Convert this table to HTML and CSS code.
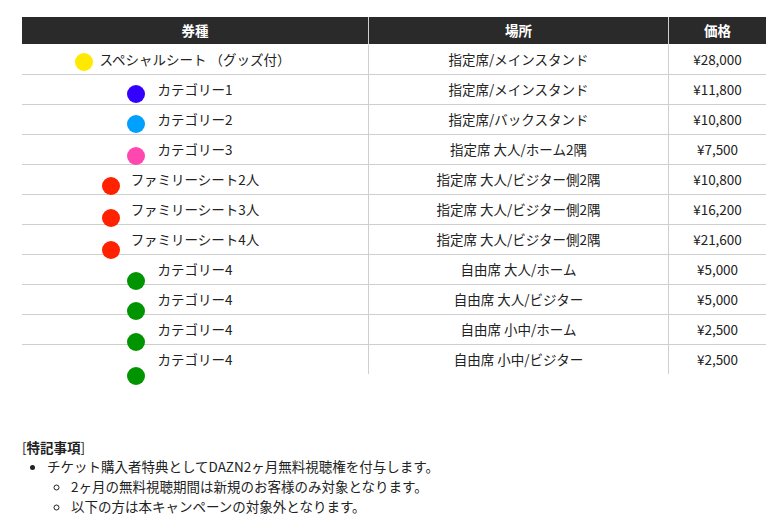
FILE: index.html
```html
<!DOCTYPE html>
<html lang="ja">
<head>
<meta charset="utf-8">
<title>券種</title>
<link rel="stylesheet" href="styles.css">
</head>
<body>
<main class="page">
  <table class="price-table">
    <thead>
      <tr>
        <th class="col-ticket">券種</th>
        <th class="col-place">場所</th>
        <th class="col-price">価格</th>
      </tr>
    </thead>
    <tbody>
      <tr>
        <td><div class="ticket"><span class="dot yellow gap-6 drop-2"></span><span class="name">スペシャルシート （グッズ付）</span></div></td>
        <td>指定席/メインスタンド</td>
        <td>¥28,000</td>
      </tr>
      <tr>
        <td><div class="ticket"><span class="dot blue gap-13 drop-4"></span><span class="name">カテゴリー1</span></div></td>
        <td>指定席/メインスタンド</td>
        <td>¥11,800</td>
      </tr>
      <tr>
        <td><div class="ticket"><span class="dot sky gap-13 drop-4"></span><span class="name">カテゴリー2</span></div></td>
        <td>指定席/バックスタンド</td>
        <td>¥10,800</td>
      </tr>
      <tr>
        <td><div class="ticket"><span class="dot pink gap-13 drop-6"></span><span class="name">カテゴリー3</span></div></td>
        <td>指定席 大人/ホーム2隅</td>
        <td>¥7,500</td>
      </tr>
      <tr>
        <td><div class="ticket"><span class="dot red gap-11 drop-6"></span><span class="name">ファミリーシート2人</span></div></td>
        <td>指定席 大人/ビジター側2隅</td>
        <td>¥10,800</td>
      </tr>
      <tr>
        <td><div class="ticket"><span class="dot red gap-11 drop-8"></span><span class="name">ファミリーシート3人</span></div></td>
        <td>指定席 大人/ビジター側2隅</td>
        <td>¥16,200</td>
      </tr>
      <tr>
        <td><div class="ticket"><span class="dot red gap-11 drop-10"></span><span class="name">ファミリーシート4人</span></div></td>
        <td>指定席 大人/ビジター側2隅</td>
        <td>¥21,600</td>
      </tr>
      <tr>
        <td><div class="ticket"><span class="dot green gap-13 drop-11"></span><span class="name">カテゴリー4</span></div></td>
        <td>自由席 大人/ホーム</td>
        <td>¥5,000</td>
      </tr>
      <tr>
        <td><div class="ticket"><span class="dot green gap-13 drop-11"></span><span class="name">カテゴリー4</span></div></td>
        <td>自由席 大人/ビジター</td>
        <td>¥5,000</td>
      </tr>
      <tr>
        <td><div class="ticket"><span class="dot green gap-13 drop-12"></span><span class="name">カテゴリー4</span></div></td>
        <td>自由席 小中/ホーム</td>
        <td>¥2,500</td>
      </tr>
      <tr>
        <td><div class="ticket"><span class="dot green gap-13 drop-16"></span><span class="name">カテゴリー4</span></div></td>
        <td>自由席 小中/ビジター</td>
        <td>¥2,500</td>
      </tr>
    </tbody>
  </table>

  <section class="notes">
    <p class="notes-title">[<strong>特記事項</strong>]</p>
    <ul class="notes-list">
      <li>チケット購入者特典としてDAZN2ヶ月無料視聴権を付与します。
        <ul class="notes-sub">
          <li>2ヶ月の無料視聴期間は新規のお客様のみ対象となります。</li>
          <li>以下の方は本キャンペーンの対象外となります。</li>
        </ul>
      </li>
    </ul>
  </section>
</main>
</body>
</html>
```

FILE: styles.css
```css
* {
  box-sizing: border-box;
}

html, body {
  margin: 0;
  padding: 0;
  background: #fff;
}

body {
  font-family: "Noto Sans CJK JP", "Noto Sans", sans-serif;
  font-size: 13.5px;
  color: #222;
}

.page {
  padding: 17px 17px 0 22px;
}

.price-table {
  width: 744px;
  border-collapse: separate;
  border-spacing: 0;
  table-layout: fixed;
}

.price-table th {
  height: 28px;
  padding: 0;
  background: #2a2a2a;
  color: #fff;
  font-weight: 700;
  font-size: 13.5px;
  line-height: 27px;
  text-align: center;
  border-bottom: 1px solid #fff;
}

.price-table th:not(:last-child),
.price-table td:not(:last-child) {
  border-right: 1px solid #cfcfcf;
}

.col-ticket { width: 347px; }
.col-place { width: 300px; }
.col-price { width: 97px; }

.price-table td {
  height: 30px;
  padding: 0;
  text-align: center;
  line-height: 29px;
  border-bottom: 1px solid #cfcfcf;
  vertical-align: middle;
}

.price-table tbody tr:last-child td {
  height: 29px;
  border-bottom: none;
}

.ticket {
  display: grid;
  grid-template-columns: 1fr auto 1fr;
  align-items: center;
  height: 29px;
}

.name {
  white-space: nowrap;
}

.dot {
  justify-self: end;
  width: 18px;
  height: 18px;
  border-radius: 50%;
}

.yellow { background: #ffe900; }
.blue { background: #3300ff; }
.sky { background: #00a0ff; }
.pink { background: #ff47b0; }
.red { background: #ff2200; }
.green { background: #009400; }

.gap-6 { margin-right: 6px; }
.gap-11 { margin-right: 11px; }
.gap-13 { margin-right: 13px; }

.drop-2 { margin-top: 2px; margin-bottom: -2px; }
.drop-4 { margin-top: 4px; margin-bottom: -4px; }
.drop-6 { margin-top: 6px; margin-bottom: -6px; }
.drop-8 { margin-top: 8px; margin-bottom: -8px; }
.drop-10 { margin-top: 10px; margin-bottom: -10px; }
.drop-11 { margin-top: 11px; margin-bottom: -11px; }
.drop-12 { margin-top: 12px; margin-bottom: -12px; }
.drop-16 { margin-top: 16px; margin-bottom: -16px; }

.notes {
  margin-top: 64px;
}

.notes-title {
  margin: 0;
  line-height: 18px;
}

.notes-title strong {
  font-weight: 700;
}

.notes-list {
  margin: 0;
  padding-left: 25px;
  line-height: 20px;
}

.notes-sub {
  margin: 0;
  padding-left: 24px;
  list-style-type: circle;
}
```
